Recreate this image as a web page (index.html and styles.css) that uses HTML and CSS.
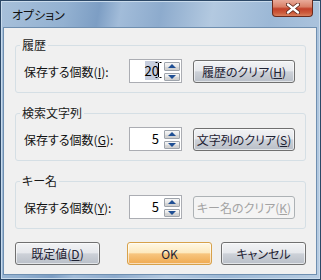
FILE: index.html
```html
<!DOCTYPE html>
<html>
<head>
    <title>オプション</title>
    <link rel="stylesheet" href="styles.css">
</head>
<body>
    <div class="window">
        <div class="titlebar">
            <span class="title">オプション</span>
            <div class="close">
                <svg width="14" height="11" viewBox="0 0 14 11">
                    <path d="M2 1.5 L12 9.5 M12 1.5 L2 9.5" stroke="#5a2418" stroke-width="4" stroke-linecap="round"/>
                    <path d="M2 1.5 L12 9.5 M12 1.5 L2 9.5" stroke="#ffffff" stroke-width="2.4" stroke-linecap="round"/>
                </svg>
            </div>
        </div>

        <div class="client">
            <!-- 履歴 -->
            <fieldset class="group">
                <legend>履歴</legend>
                <div class="row">
                    <label class="caption">保存する個数(<u>I</u>):</label>
                    <div class="spin">
                        <span class="value"><span class="sel">20</span>
                            <svg class="ibeam" width="7" height="16" viewBox="0 0 7 16">
                                <path d="M0.5 0.5 H2.5 M4.5 0.5 H6.5 M3.5 1 V15 M0.5 15.5 H2.5 M4.5 15.5 H6.5" stroke="#000" stroke-width="1" fill="none"/>
                            </svg>
                        </span>
                        <div class="arrows">
                            <span class="arrow up"></span>
                            <span class="arrow down"></span>
                        </div>
                    </div>
                    <button class="btn">履歴のクリア(<u>H</u>)</button>
                </div>
            </fieldset>

            <!-- 検索文字列 -->
            <fieldset class="group">
                <legend>検索文字列</legend>
                <div class="row">
                    <label class="caption">保存する個数(<u>G</u>):</label>
                    <div class="spin">
                        <span class="value">5</span>
                        <div class="arrows">
                            <span class="arrow up"></span>
                            <span class="arrow down"></span>
                        </div>
                    </div>
                    <button class="btn">文字列のクリア(<u>S</u>)</button>
                </div>
            </fieldset>

            <!-- キー名 -->
            <fieldset class="group">
                <legend>キー名</legend>
                <div class="row">
                    <label class="caption">保存する個数(<u>Y</u>):</label>
                    <div class="spin">
                        <span class="value">5</span>
                        <div class="arrows">
                            <span class="arrow up"></span>
                            <span class="arrow down"></span>
                        </div>
                    </div>
                    <button class="btn" disabled>キー名のクリア(<u>K</u>)</button>
                </div>
            </fieldset>

            <div class="actions">
                <button class="btn wide">既定値(<u>D</u>)</button>
                <button class="btn wide default">OK</button>
                <button class="btn wide">キャンセル</button>
            </div>
        </div>
    </div>
</body>
</html>
```

FILE: styles.css
```css
body {
    margin: 0;
    font-family: "Noto Sans CJK JP", "Noto Sans", sans-serif;
    font-size: 12px;
    font-feature-settings: "palt";
    background: #ffffff;
}

.window {
    width: 321px;
    height: 280px;
    box-sizing: border-box;
    border: 1px solid #2c4867;
    padding: 0 3px 4px 2px;
    background: linear-gradient(100deg, #a7c0da 0%, #93b1d1 18%, #7d9ec4 27%, #a2bcd9 33%, #8dabcd 44%, #b3c9e0 58%, #9cb8d6 74%, #b7cce2 100%);
    box-shadow: inset 0 0 0 1px #c9dbec;
}

/* Title bar */
.titlebar {
    height: 26px;
    display: flex;
    justify-content: space-between;
    align-items: flex-start;
}

.title {
    margin: 6px 0 0 9px;
    line-height: 16px;
    color: #111111;
}

.close {
    width: 41px;
    height: 17px;
    box-sizing: border-box;
    margin: -1px 4px 0 0;
    border: 1px solid #6b2a1c;
    border-top: none;
    border-radius: 0 0 4px 4px;
    background: linear-gradient(#e9ab9a 0%, #d98068 42%, #c2412a 55%, #cc5a3b 80%, #d8805e 100%);
    display: flex;
    justify-content: center;
    align-items: center;
}

/* Client area */
.client {
    height: 248px;
    box-sizing: border-box;
    background: #f0f0f0;
    border: 1px solid #6f8fb0;
    padding: 10px 10px 0 11px;
}

.group {
    margin: 0 0 13px 0;
    padding: 7px 10px 9px 8px;
    border: 1px solid #d5dfe5;
    border-radius: 3px;
}

.group legend {
    margin-left: -4px;
    padding: 0 2px;
    line-height: 14px;
    color: #1a1a1a;
}

.row {
    display: flex;
    align-items: center;
    height: 24px;
}

.caption {
    width: 105px;
    color: #111111;
}

/* Spin box */
.spin {
    width: 53px;
    height: 24px;
    box-sizing: border-box;
    margin-right: 11px;
    border: 1px solid #abadb3;
    background: #ffffff;
    display: flex;
}

.value {
    position: relative;
    flex: 1;
    text-align: right;
    padding-right: 5px;
    line-height: 22px;
    font-size: 13px;
    color: #000000;
}

.sel {
    background: #c6cddd;
}

.ibeam {
    position: absolute;
    right: 2px;
    top: 2px;
}

.arrows {
    width: 16px;
    padding: 2px 1px 1px 0;
    display: flex;
    flex-direction: column;
    gap: 2px;
}

.arrow {
    flex: 1;
    border: 1px solid #9ea4ac;
    border-radius: 1px;
    background: linear-gradient(#f7f7f7, #e6e6e6 50%, #d8d8d8 51%, #cfcfcf);
    display: flex;
    justify-content: center;
    align-items: center;
}

.arrow.up::after {
    content: "";
    border-left: 4px solid transparent;
    border-right: 4px solid transparent;
    border-bottom: 4px solid #1f4f94;
}

.arrow.down::after {
    content: "";
    border-left: 4px solid transparent;
    border-right: 4px solid transparent;
    border-top: 4px solid #1f4f94;
}

/* Buttons */
.btn {
    width: 102px;
    height: 23px;
    padding: 0;
    font-family: inherit;
    font-size: 12px;
    font-feature-settings: "palt";
    color: #1e2233;
    border: 1px solid #707070;
    border-radius: 3px;
    background: linear-gradient(#f2f3f5 0%, #e6e8ec 46%, #cdd1d8 52%, #b9bfc8 100%);
    box-shadow: inset 0 0 0 1px rgba(255, 255, 255, 0.6);
}

.btn u {
    text-underline-offset: 1px;
}

.btn:disabled {
    color: #a3a3a3;
    border-color: #adb2b5;
    background: #f4f4f4;
    box-shadow: none;
}

.actions {
    margin-top: 1px;
    display: flex;
    gap: 9px;
}

.btn.wide {
    width: 85px;
}

.btn.default {
    margin-left: auto;
    border-color: #d7a14a;
    background: linear-gradient(#fff8e6 0%, #fde9bf 46%, #f7c57f 52%, #efa94f 100%);
}
```
